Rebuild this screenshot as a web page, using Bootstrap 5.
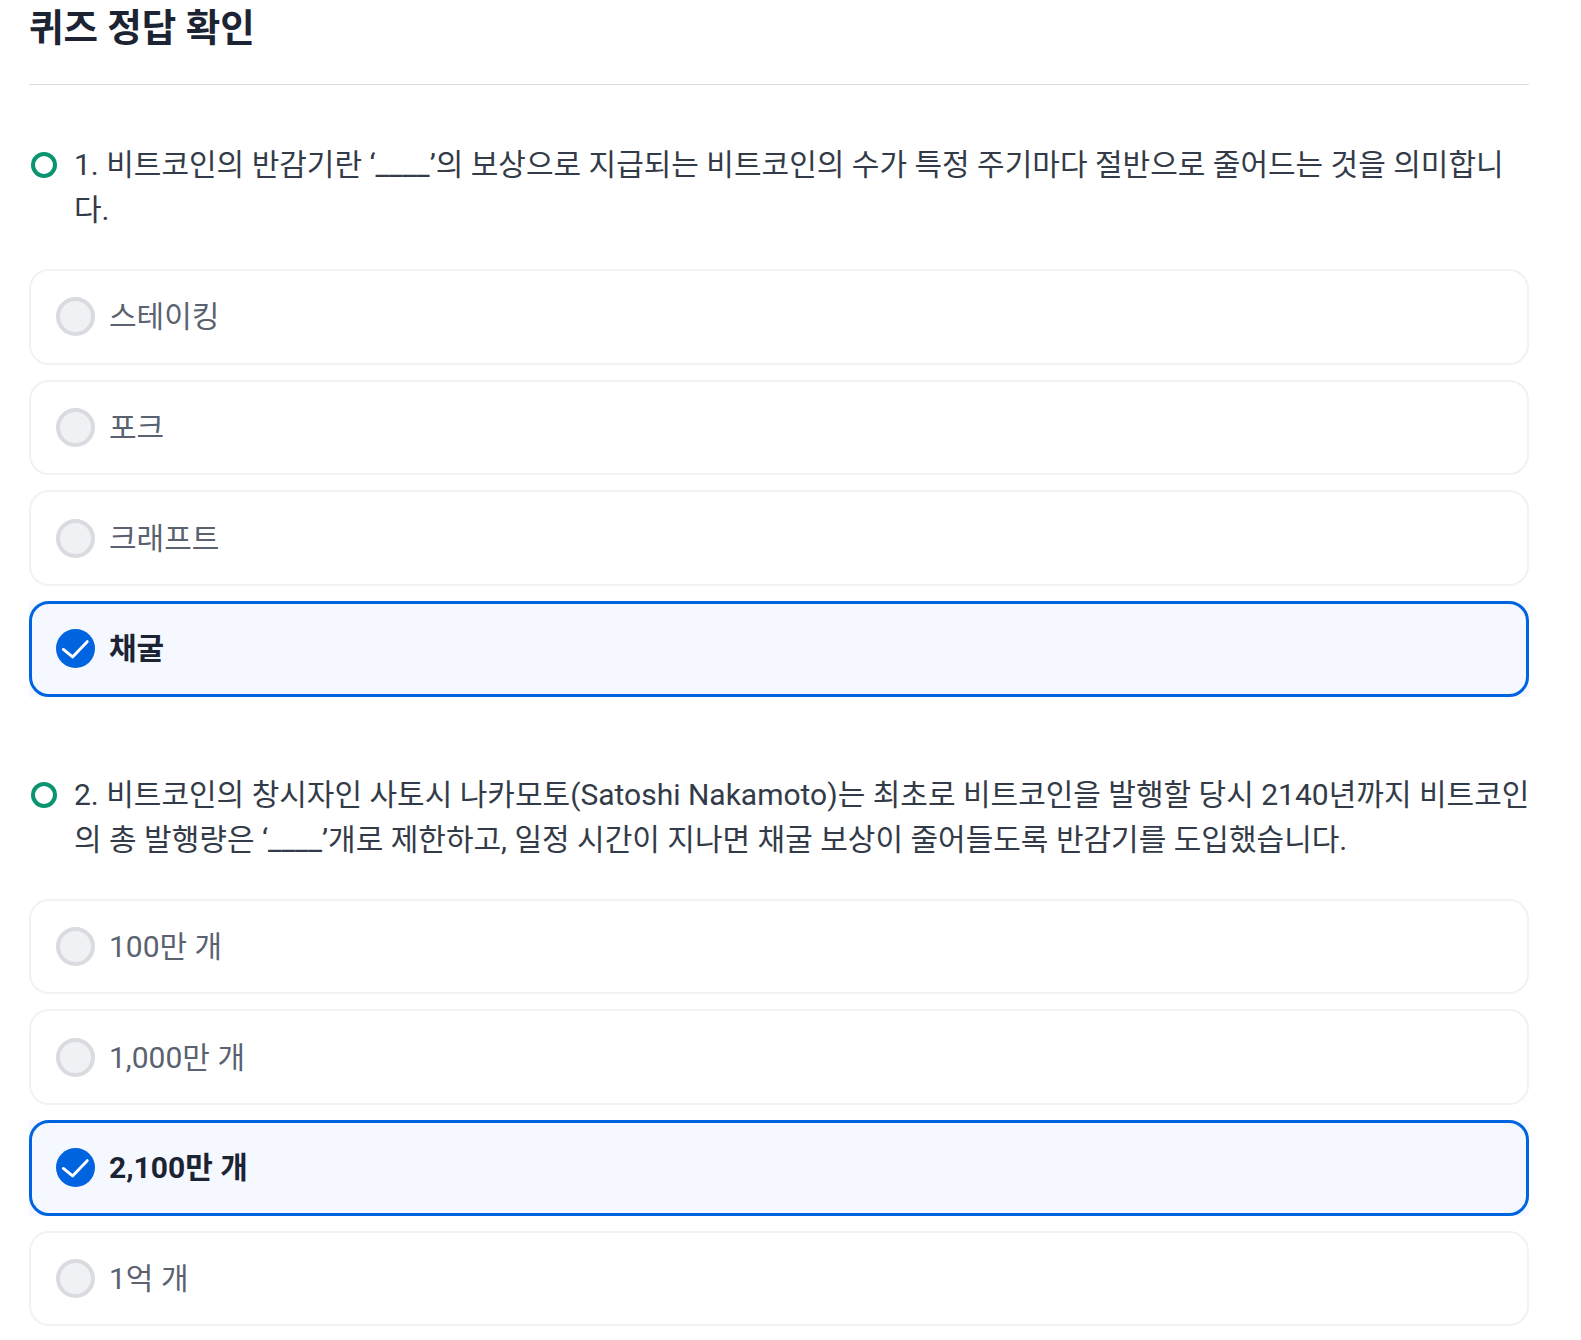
<!DOCTYPE html>
<html lang="ko">

<head>
  <meta charset="UTF-8">
  <title>퀴즈 정답 확인</title>
  <link href="https://cdn.jsdelivr.net/npm/bootstrap@5.3.2/dist/css/bootstrap.min.css" rel="stylesheet">
  <style>
    body {
      font-family: Roboto, "Noto Sans CJK KR", sans-serif;
      color: #1c2434;
      overflow: hidden;
    }
    .quiz-wrap { padding: 0 52px 0 29px; }
    .quiz-title {
      font-size: 37.5px;
      font-weight: 700;
      line-height: 54px;
      margin: 0;
      padding-top: 1px;
    }
    .quiz-line {
      margin: 29px 0 0;
      border: 0;
      border-top: 1.5px solid #d9dbe0;
      opacity: 1;
    }
    .question {
      font-size: 30px;
      line-height: 45px;
      color: #333b48;
      margin-bottom: 37px;
    }
    .question-text { margin-right: -4px; }
    .q-first { margin-top: 57px; }
    .q-next { margin-top: 75px; }
    .q-dot {
      width: 26px;
      height: 26px;
      border: 4px solid #0a9570;
      border-radius: 50%;
      margin: 10px 17px 0 2px;
      flex-shrink: 0;
    }
    .opt {
      height: 95.67px;
      font-size: 30px;
      color: #5a6270;
      border: 2px solid #f1f2f5;
      border-radius: 20px;
      padding-left: 25px;
      margin-bottom: 15px;
    }
    .opt-on-bg { background: #f5f8ff; margin-bottom: 15px; }
    .opt-on {
      border: 3px solid #0063e0;
      color: #1c2434;
      font-weight: 700;
      margin-bottom: 0;
      padding-left: 24px;
    }
    .opt-mark {
      width: 39px;
      height: 39px;
      border: 4px solid #d9dbe0;
      border-radius: 50%;
      background: #f0f1f4;
      margin-right: 14px;
      flex-shrink: 0;
    }
    .opt-check { display: block; width: 39px; height: 39px; margin-right: 14px; flex-shrink: 0; }
  </style>
</head>

<body>

  <div class="quiz-wrap">
    <h1 class="quiz-title">퀴즈 정답 확인</h1>
    <hr class="quiz-line">

    <div class="question q-first d-flex">
      <span class="q-dot"></span>
      <div class="question-text">1. 비트코인의 반감기란 ‘____’의 보상으로 지급되는 비트코인의 수가 특정 주기마다 절반으로 줄어드는 것을 의미합니다.</div>
    </div>

    <div class="opt d-flex align-items-center"><span class="opt-mark"></span>스테이킹</div>
    <div class="opt d-flex align-items-center"><span class="opt-mark"></span>포크</div>
    <div class="opt d-flex align-items-center"><span class="opt-mark"></span>크래프트</div>
    <div class="opt-on-bg">
      <div class="opt opt-on d-flex align-items-center">
        <svg class="opt-check" viewBox="0 0 40 40"><circle cx="20" cy="20" r="20" fill="#0063e0"/><path d="M7.5 21 L17 28.7 L32 13" fill="none" stroke="#fff" stroke-width="3" stroke-linecap="round" stroke-linejoin="round"/></svg>채굴
      </div>
    </div>

    <div class="question q-next d-flex">
      <span class="q-dot"></span>
      <div class="question-text">2. 비트코인의 창시자인 사토시 나카모토(Satoshi Nakamoto)는 최초로 비트코인을 발행할 당시 2140년까지 비트코인의 총 발행량은 ‘____’개로 제한하고, 일정 시간이 지나면 채굴 보상이 줄어들도록 반감기를 도입했습니다.</div>
    </div>

    <div class="opt d-flex align-items-center"><span class="opt-mark"></span>100만 개</div>
    <div class="opt d-flex align-items-center"><span class="opt-mark"></span>1,000만 개</div>
    <div class="opt-on-bg">
      <div class="opt opt-on d-flex align-items-center">
        <svg class="opt-check" viewBox="0 0 40 40"><circle cx="20" cy="20" r="20" fill="#0063e0"/><path d="M7.5 21 L17 28.7 L32 13" fill="none" stroke="#fff" stroke-width="3" stroke-linecap="round" stroke-linejoin="round"/></svg>2,100만 개
      </div>
    </div>
    <div class="opt d-flex align-items-center"><span class="opt-mark"></span>1억 개</div>
  </div>

  <script src="https://cdn.jsdelivr.net/npm/bootstrap@5.3.2/dist/js/bootstrap.bundle.min.js"></script>
</body>

</html>
